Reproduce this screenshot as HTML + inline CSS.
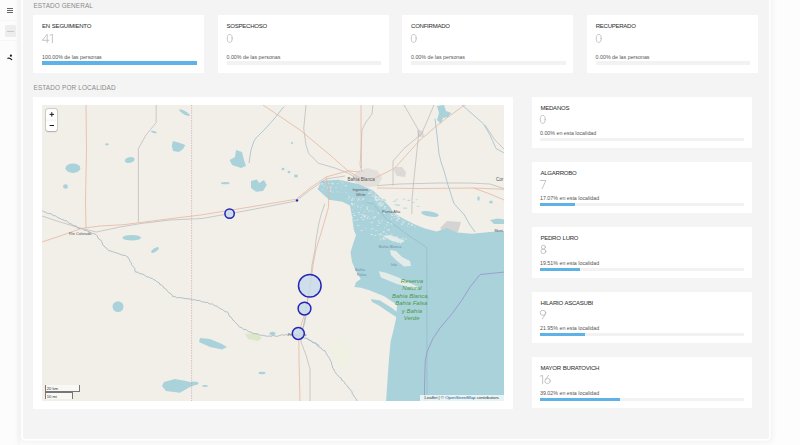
<!DOCTYPE html>
<html><head><meta charset="utf-8">
<style>
html,body{margin:0;padding:0;width:800px;height:445px;overflow:hidden;background:#fdfdfd;font-family:"Liberation Sans",sans-serif;}
.abs{position:absolute;}
#side{left:0;top:0;width:20px;height:445px;background:#fcfcfc;}
#cont{left:22.8px;top:0;width:745.8px;height:439px;background:#f4f4f4;border-radius:0 0 2px 2px;box-shadow:0 0 0 1.5px #fff, 0 0 4px 5px rgba(0,0,0,0.03);}
.lbl{font-size:6.4px;color:#8a8a8a;letter-spacing:0.1px;}
.card{background:#fff;}
.ttl{font-size:6px;color:#333;letter-spacing:-0.24px;word-spacing:0.5px;-webkit-text-stroke:0.05px #333;}
.num{font-size:12.6px;color:#c4c4c4;letter-spacing:-0.8px;}
.sub{font-size:5.3px;color:#555;}
.trk{background:#f2f2f2;height:3px;}
.bar{background:#5fb2e6;height:100%;}
</style></head><body>
<div id="side" class="abs">
  <div class="abs" style="left:14px;top:0;width:6px;height:445px;background:linear-gradient(90deg,rgba(0,0,0,0),rgba(0,0,0,0.018))"></div>
  <div class="abs" style="left:7px;top:8px;width:6px;height:1px;background:#666"></div>
  <div class="abs" style="left:7px;top:10px;width:6px;height:1px;background:#666"></div>
  <div class="abs" style="left:7px;top:12px;width:6px;height:1px;background:#666"></div>
  <div class="abs" style="left:0;top:20px;width:18px;height:1px;background:#f5f5f5"></div>
  <div class="abs" style="left:4.7px;top:25.4px;width:11.8px;height:11.5px;background:#ededed;border-radius:1.5px"></div>
  <div class="abs" style="left:6.8px;top:31px;width:7.7px;height:1px;background:#cacaca"></div>
  <div class="abs" style="left:0;top:39.5px;width:18px;height:1px;background:#f5f5f5"></div>
  <svg class="abs" style="left:6px;top:54px" width="8" height="8" viewBox="0 0 8 8"><circle cx="4.9" cy="1.7" r="1.1" fill="#1a1a1a"/><path d="M1.8,4.2 Q3.6,3.5 5.7,5.6" stroke="#1a1a1a" stroke-width="1.2" stroke-linecap="round" fill="none"/></svg>
</div>
<div id="cont" class="abs"></div>
<div class="abs lbl" style="left:33.4px;top:2px">ESTADO GENERAL</div>

<!-- top cards -->
<div class="abs card" style="left:33.2px;top:14.7px;width:171.3px;height:58.1px">
  <div class="abs ttl" style="left:8.9px;top:8px">EN SEGUIMIENTO</div>
  <svg class="abs" style="left:9.0px;top:18.9px;overflow:visible" width="12.8" height="9.3" preserveAspectRatio="none" viewBox="0 0 12.8 10"><g fill="none" stroke="#b9b9b9" stroke-width="0.85" stroke-linecap="round" stroke-linejoin="round"><g transform="translate(0.00,0)"><path d="M5.2,9.4 L5.2,0.3 L0.4,6.8 L6.9,6.8"/></g><g transform="translate(7.80,0)"><path d="M0.3,1.3 L2.6,0.3 L2.6,9.4"/></g></g></svg>
  <div class="abs sub" style="left:8.8px;top:39.6px">100.00% de las personas</div>
  <div class="abs trk" style="left:8.9px;top:46.6px;width:154.8px;height:3.6px"><div class="bar" style="width:100%"></div></div>
</div>
<div class="abs card" style="left:217.7px;top:14.7px;width:171.3px;height:58.1px">
  <div class="abs ttl" style="left:8.9px;top:8px">SOSPECHOSO</div>
  <svg class="abs" style="left:9.0px;top:18.9px;overflow:visible" width="7.1" height="9.3" preserveAspectRatio="none" viewBox="0 0 7.1 10"><g fill="none" stroke="#b9b9b9" stroke-width="0.85" stroke-linecap="round" stroke-linejoin="round"><g transform="translate(0.00,0)"><ellipse cx="2.75" cy="4.7" rx="2.45" ry="4.35"/></g></g></svg>
  <div class="abs sub" style="left:8.8px;top:39.6px">0.00% de las personas</div>
  <div class="abs trk" style="left:8.9px;top:46.6px;width:154.8px;height:3.6px"></div>
</div>
<div class="abs card" style="left:402.2px;top:14.7px;width:171.3px;height:58.1px">
  <div class="abs ttl" style="left:8.9px;top:8px">CONFIRMADO</div>
  <svg class="abs" style="left:9.0px;top:18.9px;overflow:visible" width="7.1" height="9.3" preserveAspectRatio="none" viewBox="0 0 7.1 10"><g fill="none" stroke="#b9b9b9" stroke-width="0.85" stroke-linecap="round" stroke-linejoin="round"><g transform="translate(0.00,0)"><ellipse cx="2.75" cy="4.7" rx="2.45" ry="4.35"/></g></g></svg>
  <div class="abs sub" style="left:8.8px;top:39.6px">0.00% de las personas</div>
  <div class="abs trk" style="left:8.9px;top:46.6px;width:154.8px;height:3.6px"></div>
</div>
<div class="abs card" style="left:586.8px;top:14.7px;width:171.3px;height:58.1px">
  <div class="abs ttl" style="left:8.9px;top:8px">RECUPERADO</div>
  <svg class="abs" style="left:9.0px;top:18.9px;overflow:visible" width="7.1" height="9.3" preserveAspectRatio="none" viewBox="0 0 7.1 10"><g fill="none" stroke="#b9b9b9" stroke-width="0.85" stroke-linecap="round" stroke-linejoin="round"><g transform="translate(0.00,0)"><ellipse cx="2.75" cy="4.7" rx="2.45" ry="4.35"/></g></g></svg>
  <div class="abs sub" style="left:8.8px;top:39.6px">0.00% de las personas</div>
  <div class="abs trk" style="left:8.9px;top:46.6px;width:154.8px;height:3.6px"></div>
</div>

<div class="abs lbl" style="left:33.5px;top:84.3px;letter-spacing:0.14px">ESTADO POR LOCALIDAD</div>

<!-- map card -->
<div class="abs card" style="left:33.4px;top:97px;width:479.2px;height:311.8px"></div>
<div id="map" class="abs" style="left:42px;top:105px;width:462px;height:295.5px;background:#f2efe9;overflow:hidden">
<svg width="462" height="296" viewBox="42 105 462 296" style="position:absolute;left:0;top:0;display:block">
<rect x="42" y="105" width="462" height="296" fill="#f2efe9"/>
<!-- urban areas -->
<g fill="#dcd9d6">
<path d="M352,176 L360,170 L368,168 L378,171 L382,178 L378,186 L368,187 L356,184 Z" fill="#e3e0dc"/>
<path d="M395,167 L402,167 L406,172 L405,177 L397,176 L394,171 Z"/>
<path d="M417,130 L423,131 L424,137 L418,137 Z"/>
<path d="M440,228 L447,221 L461,222 L458,232 L444,233 Z" fill="#d6d4d2"/>
</g>
<!-- green/park -->
<path d="M245,334 L256,333 L262,338 L258,341 L248,339 Z" fill="#d6e4c0" opacity="0.8"/>
<path d="M331,342 L342,338 L350,345 L350,368 L338,366 L332,355 Z" fill="#eef0e0" opacity="0.6"/>
<!-- sea -->
<path fill="#aad2db" d="M317.6,189.3 L321.5,180.7 L338.7,179.8 L348,181.7 L359.7,184.6 L373,190.5 L381,198 L389,206 L394.5,213.5 L404,219 L415,224.5 L425,228.5 L436.5,231.4 L446.8,228 L457.5,232.5 L472,233.7 L490,232 L505,231 L505,402 L386,402 L386.3,398 L387.8,375.5 L389,358.7 L390.6,341.8 L393.4,330.6 L396,319 L397,305 L384.3,296.3 L368.6,290 L360.7,287.7 L354.4,287 L356,282.2 L360.7,279 L356,271.2 L352,261.7 L350.5,252.3 L352.9,244.4 L356,235 L353.9,230 L352,217 L350,205.6 L342.5,201.8 L329,199.8 Z"/>
<!-- inlet channel -->
<path fill="#aad2db" d="M371,299 L380,300.5 L392,308 L402,316 L401,320 L390,313 L378,305 L372,302 Z"/>
<!-- islands / mudflats -->
<g fill="#e4ecea">
<path d="M378.8,271.2 L386,272.7 L398.5,277.5 L410,283 L420,288 L418,290 L405,286 L397,284 L381,277.5 Z"/>
<path d="M390,250 L396,251 L402,257 L410,261 L411,266 L404,266.5 L396,260 L391,255 Z"/>
<path d="M383,236 L390,235 L398,238 L405,241 L401,243 L392,241 Z"/>
</g>
<g fill="#dde9ea" opacity="0.9">
<ellipse cx="361.2" cy="200.1" rx="1.05" ry="0.34"/>
<ellipse cx="371.2" cy="210.2" rx="0.46" ry="0.60"/>
<ellipse cx="349.3" cy="197.3" rx="0.82" ry="0.80"/>
<ellipse cx="351.8" cy="203.5" rx="1.03" ry="0.87"/>
<ellipse cx="373.1" cy="211.6" rx="1.38" ry="0.33"/>
<ellipse cx="352.8" cy="198.5" rx="0.71" ry="0.79"/>
<ellipse cx="354.5" cy="220.3" rx="1.04" ry="0.52"/>
<ellipse cx="371.7" cy="196.0" rx="0.46" ry="0.42"/>
<ellipse cx="378.0" cy="213.1" rx="0.71" ry="0.65"/>
<ellipse cx="367.3" cy="207.1" rx="1.19" ry="0.72"/>
<ellipse cx="357.5" cy="220.0" rx="0.93" ry="0.83"/>
<ellipse cx="380.3" cy="206.5" rx="1.38" ry="0.37"/>
<ellipse cx="365.7" cy="228.6" rx="0.55" ry="0.59"/>
<ellipse cx="381.9" cy="219.9" rx="1.28" ry="0.49"/>
<ellipse cx="378.7" cy="220.9" rx="0.98" ry="0.57"/>
<ellipse cx="385.5" cy="237.4" rx="0.87" ry="0.70"/>
<ellipse cx="384.6" cy="206.4" rx="0.79" ry="0.70"/>
<ellipse cx="353.9" cy="198.5" rx="0.46" ry="0.76"/>
<ellipse cx="352.1" cy="204.6" rx="0.79" ry="0.82"/>
<ellipse cx="371.8" cy="234.5" rx="1.22" ry="0.82"/>
<ellipse cx="359.1" cy="212.5" rx="0.76" ry="0.83"/>
<ellipse cx="354.3" cy="203.9" rx="0.63" ry="0.59"/>
<ellipse cx="373.7" cy="205.3" rx="0.40" ry="0.55"/>
<ellipse cx="363.4" cy="219.6" rx="1.35" ry="0.71"/>
<ellipse cx="370.2" cy="222.0" rx="1.08" ry="0.33"/>
<ellipse cx="388.3" cy="229.7" rx="1.27" ry="0.78"/>
<ellipse cx="364.4" cy="211.8" rx="0.50" ry="0.68"/>
<ellipse cx="348.9" cy="196.2" rx="0.61" ry="0.40"/>
<ellipse cx="362.0" cy="195.5" rx="0.40" ry="0.39"/>
<ellipse cx="350.8" cy="210.1" rx="0.43" ry="0.82"/>
<ellipse cx="374.9" cy="200.0" rx="0.65" ry="0.51"/>
<ellipse cx="363.1" cy="198.8" rx="1.25" ry="0.90"/>
<ellipse cx="367.9" cy="215.7" rx="0.49" ry="0.36"/>
<ellipse cx="362.1" cy="205.4" rx="1.23" ry="0.40"/>
<ellipse cx="370.8" cy="199.9" rx="0.94" ry="0.32"/>
<ellipse cx="386.6" cy="225.7" rx="0.66" ry="0.52"/>
<ellipse cx="371.0" cy="229.6" rx="0.73" ry="0.43"/>
<ellipse cx="384.1" cy="239.3" rx="1.25" ry="0.78"/>
<ellipse cx="384.5" cy="227.8" rx="0.63" ry="0.61"/>
<ellipse cx="362.7" cy="194.4" rx="0.43" ry="0.47"/>
<ellipse cx="358.2" cy="225.5" rx="1.36" ry="0.57"/>
<ellipse cx="390.0" cy="239.4" rx="1.36" ry="0.52"/>
<ellipse cx="356.4" cy="203.7" rx="0.60" ry="0.42"/>
<ellipse cx="375.3" cy="235.3" rx="1.24" ry="0.59"/>
<ellipse cx="376.7" cy="230.6" rx="0.48" ry="0.70"/>
<ellipse cx="388.8" cy="229.8" rx="1.15" ry="0.59"/>
<ellipse cx="361.6" cy="230.6" rx="1.37" ry="0.54"/>
<ellipse cx="352.0" cy="200.1" rx="1.30" ry="0.78"/>
<ellipse cx="392.1" cy="223.9" rx="0.75" ry="0.63"/>
<ellipse cx="391.6" cy="223.5" rx="0.93" ry="0.86"/>
<ellipse cx="357.8" cy="206.8" rx="0.64" ry="0.65"/>
<ellipse cx="358.2" cy="212.7" rx="0.53" ry="0.85"/>
<ellipse cx="362.6" cy="214.5" rx="0.98" ry="0.84"/>
<ellipse cx="369.6" cy="218.0" rx="0.92" ry="0.31"/>
<ellipse cx="366.7" cy="201.6" rx="0.40" ry="0.78"/>
<ellipse cx="354.1" cy="215.3" rx="1.13" ry="0.63"/>
<ellipse cx="361.3" cy="217.4" rx="0.96" ry="0.77"/>
<ellipse cx="357.7" cy="206.0" rx="1.17" ry="0.60"/>
<ellipse cx="372.4" cy="228.7" rx="1.31" ry="0.57"/>
<ellipse cx="374.8" cy="216.8" rx="0.91" ry="0.72"/>
<ellipse cx="367.3" cy="218.1" rx="0.88" ry="0.86"/>
<ellipse cx="378.9" cy="234.2" rx="1.34" ry="0.46"/>
<ellipse cx="351.7" cy="213.8" rx="0.47" ry="0.44"/>
<ellipse cx="382.8" cy="235.2" rx="0.55" ry="0.73"/>
<ellipse cx="377.0" cy="199.7" rx="1.28" ry="0.88"/>
<ellipse cx="364.7" cy="215.9" rx="1.39" ry="0.80"/>
<ellipse cx="353.6" cy="213.3" rx="0.92" ry="0.50"/>
<ellipse cx="355.2" cy="208.0" rx="1.12" ry="0.31"/>
<ellipse cx="372.0" cy="213.7" rx="0.42" ry="0.50"/>
<ellipse cx="375.3" cy="217.1" rx="0.46" ry="0.89"/>
<ellipse cx="383.1" cy="238.7" rx="0.50" ry="0.46"/>
<ellipse cx="358.7" cy="199.1" rx="0.82" ry="0.85"/>
<ellipse cx="372.8" cy="225.9" rx="0.49" ry="0.33"/>
<ellipse cx="378.3" cy="213.0" rx="0.47" ry="0.86"/>
<ellipse cx="375.8" cy="230.7" rx="0.48" ry="0.81"/>
<ellipse cx="367.3" cy="208.9" rx="0.95" ry="0.86"/>
<ellipse cx="358.6" cy="199.1" rx="0.93" ry="0.44"/>
<ellipse cx="351.1" cy="200.6" rx="0.45" ry="0.42"/>
<ellipse cx="360.7" cy="207.3" rx="1.16" ry="0.47"/>
<ellipse cx="369.5" cy="201.4" rx="0.75" ry="0.31"/>
<ellipse cx="357.8" cy="193.7" rx="1.13" ry="0.63"/>
<ellipse cx="354.9" cy="215.3" rx="1.33" ry="0.36"/>
<ellipse cx="384.5" cy="213.3" rx="0.90" ry="0.80"/>
<ellipse cx="364.5" cy="216.8" rx="1.09" ry="0.89"/>
<ellipse cx="379.2" cy="222.9" rx="0.80" ry="0.51"/>
<ellipse cx="348.6" cy="199.1" rx="0.47" ry="0.74"/>
<ellipse cx="358.0" cy="200.7" rx="0.48" ry="0.80"/>
<ellipse cx="386.9" cy="224.5" rx="0.68" ry="0.45"/>
<ellipse cx="359.8" cy="214.6" rx="0.56" ry="0.57"/>
<ellipse cx="391.7" cy="218.7" rx="0.64" ry="0.88"/>
<ellipse cx="360.5" cy="209.8" rx="0.40" ry="0.53"/>
<ellipse cx="368.3" cy="216.6" rx="0.60" ry="0.60"/>
<ellipse cx="348.0" cy="194.1" rx="0.70" ry="0.44"/>
<ellipse cx="373.5" cy="217.9" rx="1.15" ry="0.69"/>
<ellipse cx="379.7" cy="234.3" rx="0.79" ry="0.50"/>
<ellipse cx="380.0" cy="223.2" rx="0.44" ry="0.80"/>
<ellipse cx="387.9" cy="222.5" rx="1.13" ry="0.79"/>
<ellipse cx="352.5" cy="217.6" rx="0.90" ry="0.80"/>
<ellipse cx="383.8" cy="231.8" rx="0.98" ry="0.84"/>
<ellipse cx="378.1" cy="225.6" rx="0.63" ry="0.32"/>
<ellipse cx="352.3" cy="210.0" rx="0.50" ry="0.80"/>
<ellipse cx="372.3" cy="222.5" rx="1.03" ry="0.71"/>
<ellipse cx="369.0" cy="193.2" rx="1.20" ry="0.75"/>
<ellipse cx="369.6" cy="218.2" rx="1.06" ry="0.34"/>
<ellipse cx="380.6" cy="204.9" rx="0.47" ry="0.46"/>
<ellipse cx="380.3" cy="202.6" rx="1.14" ry="0.89"/>
<ellipse cx="369.2" cy="211.0" rx="0.88" ry="0.71"/>
<ellipse cx="382.0" cy="222.0" rx="1.04" ry="0.35"/>
<ellipse cx="352.9" cy="204.9" rx="1.14" ry="0.48"/>
<ellipse cx="377.6" cy="225.5" rx="1.08" ry="0.47"/>
<ellipse cx="387.5" cy="205.9" rx="0.87" ry="0.37"/>
<ellipse cx="385.5" cy="201.1" rx="0.54" ry="0.51"/>
<ellipse cx="383.2" cy="203.8" rx="1.40" ry="0.65"/>
<ellipse cx="382.8" cy="204.8" rx="0.68" ry="0.33"/>
<ellipse cx="379.5" cy="200.0" rx="0.91" ry="0.41"/>
<ellipse cx="398.5" cy="216.4" rx="1.03" ry="0.85"/>
<ellipse cx="394.6" cy="211.3" rx="0.69" ry="0.33"/>
<ellipse cx="386.2" cy="202.3" rx="0.70" ry="0.74"/>
<ellipse cx="377.0" cy="196.8" rx="0.61" ry="0.84"/>
<ellipse cx="379.2" cy="199.8" rx="0.97" ry="0.83"/>
<ellipse cx="384.4" cy="207.7" rx="0.78" ry="0.50"/>
<ellipse cx="387.1" cy="210.9" rx="1.26" ry="0.43"/>
<ellipse cx="380.1" cy="199.5" rx="0.80" ry="0.57"/>
<ellipse cx="396.8" cy="217.7" rx="1.37" ry="0.45"/>
<ellipse cx="375.3" cy="196.6" rx="0.92" ry="0.71"/>
<ellipse cx="391.4" cy="214.9" rx="0.86" ry="0.63"/>
<ellipse cx="375.8" cy="199.6" rx="1.04" ry="0.72"/>
<ellipse cx="375.4" cy="194.1" rx="0.92" ry="0.65"/>
<ellipse cx="381.0" cy="205.8" rx="1.36" ry="0.69"/>
<ellipse cx="379.0" cy="199.4" rx="1.36" ry="0.72"/>
<ellipse cx="386.9" cy="212.2" rx="0.82" ry="0.45"/>
<ellipse cx="382.1" cy="204.6" rx="1.08" ry="0.42"/>
<ellipse cx="395.9" cy="214.2" rx="0.90" ry="0.42"/>
<ellipse cx="378.7" cy="204.5" rx="1.07" ry="0.87"/>
<ellipse cx="398.9" cy="218.5" rx="1.13" ry="0.90"/>
<ellipse cx="383.2" cy="202.0" rx="0.57" ry="0.30"/>
<ellipse cx="380.4" cy="202.5" rx="1.36" ry="0.37"/>
<ellipse cx="377.8" cy="202.9" rx="1.30" ry="0.32"/>
<ellipse cx="373.0" cy="193.9" rx="1.32" ry="0.45"/>
<ellipse cx="382.2" cy="200.2" rx="1.36" ry="0.67"/>
<ellipse cx="381.5" cy="200.3" rx="0.40" ry="0.75"/>
<ellipse cx="383.6" cy="199.5" rx="0.83" ry="0.60"/>
<ellipse cx="396.1" cy="214.2" rx="1.22" ry="0.76"/>
<ellipse cx="381.6" cy="202.9" rx="1.18" ry="0.35"/>
<ellipse cx="379.0" cy="204.5" rx="1.02" ry="0.70"/>
<ellipse cx="394.4" cy="217.4" rx="1.06" ry="0.37"/>
<ellipse cx="379.4" cy="199.4" rx="0.55" ry="0.83"/>
<ellipse cx="397.2" cy="219.4" rx="0.44" ry="0.48"/>
<ellipse cx="375.6" cy="197.7" rx="1.37" ry="0.65"/>
<ellipse cx="389.9" cy="210.6" rx="0.62" ry="0.52"/>
<ellipse cx="322.2" cy="183.4" rx="0.65" ry="0.66"/>
<ellipse cx="337.5" cy="183.4" rx="0.41" ry="0.50"/>
<ellipse cx="338.3" cy="183.2" rx="0.71" ry="0.42"/>
<ellipse cx="341.9" cy="187.6" rx="0.46" ry="0.36"/>
<ellipse cx="329.9" cy="187.6" rx="1.04" ry="0.35"/>
<ellipse cx="322.9" cy="189.3" rx="0.81" ry="0.47"/>
<ellipse cx="327.4" cy="187.8" rx="0.76" ry="0.55"/>
<ellipse cx="328.9" cy="183.4" rx="1.13" ry="0.42"/>
<ellipse cx="330.7" cy="190.8" rx="0.81" ry="0.83"/>
<ellipse cx="331.8" cy="183.0" rx="0.41" ry="0.63"/>
<ellipse cx="337.2" cy="191.9" rx="0.49" ry="0.67"/>
<ellipse cx="329.1" cy="187.1" rx="0.55" ry="0.47"/>
<ellipse cx="333.6" cy="192.1" rx="0.51" ry="0.59"/>
<ellipse cx="342.1" cy="192.6" rx="0.60" ry="0.38"/>
<ellipse cx="346.3" cy="192.7" rx="0.88" ry="0.33"/>
<ellipse cx="345.8" cy="185.7" rx="1.30" ry="0.67"/>
<ellipse cx="342.7" cy="182.9" rx="1.19" ry="0.43"/>
<ellipse cx="330.1" cy="191.2" rx="1.23" ry="0.41"/>
<ellipse cx="324.5" cy="185.8" rx="0.92" ry="0.53"/>
<ellipse cx="321.7" cy="184.0" rx="1.12" ry="0.84"/>
<ellipse cx="340.7" cy="181.5" rx="1.24" ry="0.37"/>
<ellipse cx="336.0" cy="187.6" rx="1.03" ry="0.48"/>
<ellipse cx="330.6" cy="188.0" rx="0.83" ry="0.70"/>
<ellipse cx="331.4" cy="186.3" rx="0.42" ry="0.67"/>
<ellipse cx="332.7" cy="183.8" rx="1.16" ry="0.77"/>
<ellipse cx="391.9" cy="234.2" rx="0.87" ry="0.36"/>
<ellipse cx="383.3" cy="237.2" rx="0.49" ry="0.57"/>
<ellipse cx="399.1" cy="241.3" rx="0.91" ry="0.33"/>
<ellipse cx="393.1" cy="236.5" rx="1.35" ry="0.38"/>
<ellipse cx="399.0" cy="241.8" rx="0.59" ry="0.89"/>
<ellipse cx="400.5" cy="243.2" rx="0.47" ry="0.51"/>
<ellipse cx="385.4" cy="235.2" rx="0.91" ry="0.49"/>
<ellipse cx="381.0" cy="234.2" rx="0.56" ry="0.86"/>
<ellipse cx="397.7" cy="242.7" rx="0.57" ry="0.77"/>
<ellipse cx="383.0" cy="238.4" rx="1.04" ry="0.52"/>
<ellipse cx="402.7" cy="238.7" rx="0.98" ry="0.83"/>
<ellipse cx="396.4" cy="236.7" rx="1.20" ry="0.46"/>
<ellipse cx="405.8" cy="238.9" rx="0.76" ry="0.76"/>
<ellipse cx="391.5" cy="234.1" rx="1.14" ry="0.33"/>
<ellipse cx="395.2" cy="240.0" rx="0.71" ry="0.30"/>
<ellipse cx="380.9" cy="233.8" rx="1.02" ry="0.56"/>
<ellipse cx="393.3" cy="242.7" rx="0.53" ry="0.44"/>
<ellipse cx="380.1" cy="236.3" rx="0.51" ry="0.51"/>
<ellipse cx="385.8" cy="239.0" rx="0.99" ry="0.42"/>
<ellipse cx="396.2" cy="237.7" rx="0.53" ry="0.86"/>
<ellipse cx="386.3" cy="233.8" rx="0.50" ry="0.68"/>
<ellipse cx="402.7" cy="241.4" rx="0.80" ry="0.46"/>
<ellipse cx="380.3" cy="239.7" rx="0.96" ry="0.51"/>
<ellipse cx="396.8" cy="237.3" rx="1.34" ry="0.74"/>
<ellipse cx="381.1" cy="238.4" rx="0.81" ry="0.44"/>
</g>
<g fill="#dde9ea" opacity="0.9"><ellipse cx="389.1" cy="212.4" rx="1.14" ry="0.53"/><ellipse cx="391.9" cy="213.5" rx="0.55" ry="0.56"/><ellipse cx="398.1" cy="221.7" rx="0.48" ry="0.45"/><ellipse cx="375.7" cy="199.7" rx="0.42" ry="0.53"/><ellipse cx="392.5" cy="215.6" rx="0.80" ry="0.63"/><ellipse cx="382.1" cy="199.2" rx="0.63" ry="0.34"/><ellipse cx="371.2" cy="192.4" rx="1.04" ry="0.39"/><ellipse cx="376.9" cy="200.8" rx="1.18" ry="0.70"/><ellipse cx="376.9" cy="200.3" rx="1.02" ry="0.46"/><ellipse cx="385.0" cy="208.1" rx="1.17" ry="0.54"/><ellipse cx="375.3" cy="196.2" rx="1.13" ry="0.71"/><ellipse cx="378.7" cy="197.6" rx="0.99" ry="0.77"/><ellipse cx="411.9" cy="224.8" rx="0.73" ry="0.70"/><ellipse cx="376.3" cy="196.8" rx="1.12" ry="0.63"/><ellipse cx="408.7" cy="223.9" rx="0.97" ry="0.78"/><ellipse cx="398.1" cy="216.2" rx="1.05" ry="0.78"/><ellipse cx="379.9" cy="203.8" rx="0.96" ry="0.56"/><ellipse cx="397.3" cy="220.2" rx="0.71" ry="0.70"/><ellipse cx="402.8" cy="222.7" rx="0.91" ry="0.66"/><ellipse cx="373.2" cy="195.9" rx="0.81" ry="0.66"/><ellipse cx="381.9" cy="205.2" rx="1.08" ry="0.75"/><ellipse cx="414.8" cy="226.9" rx="0.62" ry="0.54"/><ellipse cx="407.6" cy="226.0" rx="0.78" ry="0.46"/><ellipse cx="375.9" cy="199.1" rx="0.95" ry="0.46"/><ellipse cx="378.8" cy="197.9" rx="0.82" ry="0.52"/><ellipse cx="385.2" cy="206.5" rx="0.82" ry="0.38"/><ellipse cx="403.8" cy="222.4" rx="1.12" ry="0.46"/><ellipse cx="371.4" cy="191.5" rx="0.84" ry="0.56"/><ellipse cx="375.4" cy="198.2" rx="1.07" ry="0.80"/><ellipse cx="401.8" cy="223.8" rx="0.55" ry="0.53"/><ellipse cx="376.0" cy="196.6" rx="0.81" ry="0.31"/><ellipse cx="401.9" cy="224.4" rx="0.90" ry="0.50"/><ellipse cx="404.0" cy="221.1" rx="1.05" ry="0.50"/><ellipse cx="411.7" cy="225.2" rx="0.96" ry="0.68"/><ellipse cx="383.4" cy="208.8" rx="0.41" ry="0.48"/><ellipse cx="401.8" cy="220.5" rx="1.18" ry="0.31"/><ellipse cx="397.4" cy="219.6" rx="0.61" ry="0.50"/><ellipse cx="396.5" cy="220.4" rx="0.44" ry="0.77"/><ellipse cx="392.9" cy="213.9" rx="0.69" ry="0.44"/><ellipse cx="387.9" cy="209.1" rx="1.18" ry="0.42"/><ellipse cx="396.2" cy="215.3" rx="1.00" ry="0.39"/><ellipse cx="412.7" cy="225.2" rx="0.43" ry="0.33"/><ellipse cx="394.1" cy="215.2" rx="0.70" ry="0.54"/><ellipse cx="404.0" cy="223.5" rx="0.46" ry="0.36"/><ellipse cx="370.0" cy="193.3" rx="0.85" ry="0.54"/></g>
<g fill="#aad2db"><rect x="407.4" y="200.0" width="2.7" height="0.6"/><rect x="383.0" y="199.1" width="2.5" height="0.6"/><rect x="383.3" y="200.0" width="2.6" height="0.6"/><rect x="407.8" y="199.8" width="1.7" height="0.6"/><rect x="394.3" y="204.3" width="2.0" height="0.6"/><rect x="384.7" y="204.1" width="2.4" height="0.6"/><rect x="416.7" y="206.4" width="2.9" height="0.6"/><rect x="397.5" y="205.0" width="2.0" height="0.6"/><rect x="392.7" y="201.0" width="2.9" height="0.6"/><rect x="415.8" y="199.5" width="2.0" height="0.6"/><rect x="394.6" y="200.6" width="2.1" height="0.6"/><rect x="395.5" y="198.9" width="2.3" height="0.6"/><rect x="411.9" y="202.4" width="2.8" height="0.6"/><rect x="402.5" y="198.8" width="2.6" height="0.6"/></g>
<!-- water bodies -->
<g fill="#aad2db">
<ellipse cx="72.9" cy="168.2" rx="7.4" ry="4.8"/>
<ellipse cx="65.5" cy="186.5" rx="2.4" ry="2.2"/>
<ellipse cx="129.7" cy="160" rx="5" ry="2.8" transform="rotate(-15 129.7 160)"/>
<ellipse cx="107" cy="144.3" rx="1.9" ry="1.1"/>
<path d="M173,141 L180,143 L185.4,145 L183,149 L179,152 L173,151 L171.8,146 Z"/>
<ellipse cx="184.5" cy="112.7" rx="6" ry="1.7" transform="rotate(30 184.5 112.7)"/>
<ellipse cx="153.9" cy="132" rx="3" ry="1" transform="rotate(15 153.9 132)"/>
<path d="M236,150 L242,152 L244,160 L246,166 L241,168 L232,165 L229.6,160 L235,157 Z"/>
<path d="M251,181 L257,179.4 L259,183 L264,180 L266.7,185 L263,191 L256,191.8 L251,188 Z"/>
<ellipse cx="225.3" cy="183.2" rx="4.3" ry="1.1"/>
<ellipse cx="283" cy="169" rx="1.5" ry="1.2"/>
<ellipse cx="289" cy="172" rx="1.5" ry="1.2"/>
<ellipse cx="296" cy="176" rx="2" ry="1.4"/>
<ellipse cx="292" cy="143" rx="1.2" ry="1"/>
<ellipse cx="131.7" cy="237.7" rx="9.3" ry="2.8"/>
<ellipse cx="155" cy="250" rx="4.5" ry="1.7" transform="rotate(-35 155 250)"/>
<ellipse cx="118" cy="306.6" rx="5.5" ry="5.4"/>
<path d="M164,382 L175,379 L186,381 L197.8,384 L190,387 L180,392.7 L166,391 L162,386 Z"/>
<path d="M200,338 L210,339 L222,344 L227,347 L222,349.4 L210,347 L199,342 Z"/>
<ellipse cx="194" cy="383.2" rx="4.5" ry="1.6"/>
<ellipse cx="205" cy="386" rx="3" ry="1"/>
<ellipse cx="262" cy="373" rx="3.5" ry="1.2"/>
<ellipse cx="272.5" cy="333.5" rx="3" ry="1.8"/>
<path d="M437,106 L444,105 L446,111 L451.3,113 L448,117 L443,118 L441,123.8 L437,120 L439,113 Z"/>
<ellipse cx="430" cy="214" rx="9" ry="2.6" transform="rotate(10 430 214)"/>
<path d="M490,220 L498,218.5 L504,219.5 L504,224 L494,224 Z"/>
<ellipse cx="478.5" cy="198.5" rx="1.2" ry="2.3"/>
<ellipse cx="491" cy="202" rx="1.8" ry="1.5"/>
<ellipse cx="398" cy="205" rx="2.5" ry="0.6"/>
<ellipse cx="405" cy="208" rx="2.5" ry="0.6"/>
</g>
<!-- rivers -->
<g fill="none" stroke="#9ebfcb" stroke-width="0.8">
<path stroke="#9fb3bd" d="M42.1,210.7 L43.6,211.7 L45.3,212.1 L46.8,213.0 L48.4,213.6 L50.3,213.6 L52.0,214.2 L53.2,215.8 L55.1,215.7 L56.8,216.5 L58.0,218.0 L59.9,218.2 L61.3,219.4 L63.1,219.7 L64.7,220.7 L66.6,220.9 L67.9,222.1 L69.3,223.3 L71.1,223.9 L72.6,225.0 L74.2,225.8 L76.1,226.1 L77.3,227.8 L79.0,228.5 L80.9,228.7 L82.8,228.9 L84.3,230.4 L86.2,230.4 L87.9,231.2 L89.5,232.1 L91.3,232.7 L92.8,233.6 L94.8,233.8 L96.1,234.8 L97.4,235.9 L97.8,237.6 L98.7,238.9 L100.4,239.7 L101.4,241.3 L102.3,242.8 L102.5,244.8 L104.1,245.9 L105.1,247.3 L106.6,248.2 L107.6,249.5 L108.8,250.6 L110.7,251.0 L112.5,251.7 L114.3,252.2 L116.0,253.0 L117.9,253.2 L119.3,254.0 L120.9,254.5 L122.3,255.2 L123.9,255.4 L125.6,255.4 L126.8,256.7 L128.0,257.1 L128.7,258.6 L129.7,260.0 L130.1,261.6 L131.3,262.8 L131.5,264.6 L132.6,265.9 L133.7,267.2 L134.8,268.5 L134.8,270.5 L135.8,272.2 L137.9,272.0 L139.2,273.5 L141.0,273.8 L142.8,274.2 L144.4,275.1 L145.9,276.3 L147.3,277.1 L149.2,276.9 L150.4,278.2 L152.2,278.3 L153.4,279.7 L155.1,280.0 L156.3,281.3 L157.6,282.0 L159.2,282.8 L159.9,284.5 L161.7,285.1 L163.0,286.2 L163.7,287.8 L165.4,288.6 L166.6,290.0 L167.7,291.4 L168.9,292.8 L170.6,293.6 L172.0,294.8 L172.9,296.8 L174.8,296.5 L176.5,297.6 L178.3,297.8 L180.2,297.5 L182.0,298.0 L183.7,298.2 L185.3,298.6 L187.0,298.7 L188.7,298.9 L190.4,299.1 L192.0,299.9 L193.7,299.7 L195.4,299.9 L197.0,300.6 L198.7,300.4 L200.4,300.8 L201.8,301.9 L203.7,301.9 L205.4,302.5 L207.3,302.4 L208.9,303.4 L210.5,304.1 L212.5,303.9 L213.9,305.1 L215.4,305.9 L217.1,306.2 L218.3,307.6 L219.8,308.2 L221.1,309.2 L222.8,309.7 L224.0,310.9 L225.4,311.7 L227.5,311.9 L228.4,313.3 L228.8,315.0 L229.6,316.5 L231.2,317.2 L232.0,318.7 L232.9,320.1 L234.5,321.3 L235.7,322.7 L237.1,324.0 L238.3,325.5 L239.5,327.1 L241.2,327.5 L242.7,328.4 L244.0,329.5 L246.0,329.5 L247.3,330.8 L248.8,331.8 L250.5,332.0 L252.1,332.7 L253.6,333.8 L255.5,333.6 L257.2,333.9 L258.9,334.6 L260.5,335.4 L262.4,335.1 L264.0,335.8 L265.7,335.8 L267.4,336.4 L269.1,335.9 L270.9,336.4 L272.6,335.6 L274.3,335.8 L276.0,336.2 L277.7,336.3 L279.2,335.6 L280.8,335.1 L282.5,334.8 L284.1,335.2 L285.7,334.6 L287.4,335.1 L288.9,335.0 L290.9,334.5 L292.6,334.9 L294.3,335.8 L296.2,335.9 L297.9,336.4 L299.7,336.3 L301.3,336.5 L302.9,337.1 L304.3,338.2 L306.1,338.1 L307.5,339.0 L308.9,339.8 L310.3,340.7 L311.8,341.5 L312.9,342.8 L314.8,342.8 L316.4,343.5 L316.9,345.4 L318.2,346.4 L319.4,347.5 L321.0,347.9 L321.9,349.4 L323.2,350.4 L325.0,350.7 L325.7,352.1 L326.4,353.8 L327.4,355.3 L328.4,356.8 L329.4,358.3 L330.2,359.9 L330.9,361.4 L331.6,362.9 L331.6,364.6 L332.5,366.0 L332.5,367.8 L333.8,368.9 L334.1,370.9 L335.4,372.0 L336.2,373.6 L337.3,374.9 L338.4,376.2 L339.8,377.4 L341.4,378.3 L341.8,380.2 L343.4,381.0 L344.5,382.4 L345.3,384.0 L346.5,385.2 L347.8,386.4 L348.5,388.1 L349.9,389.1 L351.0,390.4 L352.0,391.9 L352.3,393.7 L353.5,395.0 L354.1,396.7 L355.4,397.9 L356.4,399.3 L357.0,401.0"/>
<path d="M284,106.5 L278,114 L274,119 L266,128 L256,138 L254,141 L251,150 L249,163"/>
<path d="M435,118.8 L437,135 L439,153.5 L441,162 L444,170.8 L448,185 L453.8,203 L458,208 L463.7,214 L470,225 L475,232"/>
<path d="M461,104 L470,112 L483.5,123.8 L490,135 L496,148.5 L505,153.5"/>
<path d="M300,334 L304,325 L306,316"/>
<path d="M306,338 L320,346"/>
</g>
<!-- grey roads / rail -->
<g fill="none" stroke="#b3b3b3" stroke-width="0.65">
<path d="M156.2,104 L156.2,122.5 L146,135 L138.4,148.5 L138.4,221"/>
<path d="M42,216 L60,222 L81.6,228.4 L96.4,232 L120,227 L141,223.5 L170,220 L202,218.5 L250,210 L296,201 L310,190 L326,179 L345,176"/>
<path d="M306,105 L303.7,128.7 L306,145 L308.7,153.5 L318.6,163.3 L335,168 L348,173 L356,178"/>
<path d="M373,104 L372,114 L366,122 L362,130 L361,150 L360,165 L362,172"/>
<path d="M434,105 L421.7,133.7 L404,148.5 L393,161 L393,185.6"/>
<path d="M404,105 L419,131 L417,150 L414,178.2 L412,200 L411.8,214"/>
<path d="M377,185.6 L400,184 L439,183 L468.6,183 L490,184 L505,189"/>
<path d="M324.8,203.7 L321,215 L318.6,224.7 L316,240 L315,249.5 L312,265 L310,285 L306,310 L301,342 L306,355 L310,369 L310,402"/>
<path d="M485,125 L495,140 L505,150" />
</g>
<!-- orange roads -->
<g fill="none" stroke="#e6b39c" stroke-width="0.75">
<path d="M86,105 L86.5,150 L85.5,200 L86,228.4"/>
<path d="M138.4,221 L138.4,222"/>
<path d="M42,242 L60,236 L81.6,228.4 L100,226 L123.6,224.7 L160,220 L202,214.8 L250,207 L296.3,199.2 L310,188 L326,177 L348,170.8 L360,172"/>
<path d="M263,105 L300,130 L330,155 L348,170.8 L360,178"/>
<path d="M326,177 L329,190 L328.5,207.4 L322,230 L316,249.5 L313,265 L311,281.6 L308,298 L306,310 L302,322 L298.8,334.6 L299,360 L300,402"/>
<path d="M374.7,178.2 L394.5,168.3 L419,141 L440,123 L462.5,106.5 L467,104"/>
<path d="M377,188 L420,188.5 L473.6,188 L505,189.3"/>
<path d="M473.6,188 L490,194 L505,200.4"/>
<path d="M361,105 L361,130 L361.5,168"/>
</g>
<!-- admin boundary -->
<path d="M191.6,105 L191.6,402" stroke="#d2a2b6" stroke-width="0.7" stroke-dasharray="1.4,1.1" fill="none"/>
<!-- maritime boundary -->
<path d="M365.4,201.8 L373,203.7 L386.4,219 L408,235 L426.8,247.6 L427,402" stroke="#8fb7c4" stroke-width="0.6" fill="none"/>
<path d="M505,272 L490,273.5 L480,274.5 L470,287 L462,300 L452,313.7 L440,328 L432.7,339 L427,352 L425.2,361.5 L424.5,386.7 L424.5,402" stroke="#9a98c8" stroke-width="0.9" fill="none"/>
<!-- green reserve text -->
<g font-family="Liberation Sans" font-style="italic" font-size="6" fill="#4a9a4a" text-anchor="middle">
<text x="412" y="282.5">Reserva</text>
<text x="412" y="290">Natural</text>
<text x="410.6" y="297.6">Bahía Blanca,</text>
<text x="411.3" y="305.2">Bahía Falsa</text>
<text x="412" y="312.8">y Bahía</text>
<text x="411.6" y="319.6">Verde</text>
</g>
<!-- labels -->
<g font-family="Liberation Sans" font-size="4.6" fill="#555">
<text x="347.5" y="181">Bahía Blanca</text>
<text x="352.4" y="190.5" font-size="3.8">Ingeniero</text>
<text x="356" y="195.5" font-size="3.8">White</text>
<text x="382" y="213" font-size="4">Punta Alta</text>
<text x="496" y="181">Cor</text>
<text x="494.4" y="232" font-size="3.8">Mont</text>
<text x="69" y="234.6" font-size="3.8">Río Colorado</text>
<text x="287.7" y="336" font-size="3.8">Pedro Luro</text>
</g>
<g font-family="Liberation Sans" font-size="3.8" fill="#6a8fa8">
<text x="378.8" y="247.6">Bahía Blanca</text>
<text x="391" y="266">Isla</text><text x="355" y="271">Bahía</text><text x="357" y="275.5">Falsa</text>
</g>
<!-- circles -->
<g stroke="#2424b8" stroke-width="1.5" fill="rgba(200,220,235,0.85)">
<circle cx="229.6" cy="213.6" r="4.7"/>
<circle cx="309.8" cy="285.7" r="11.3"/>
<circle cx="304.5" cy="308.6" r="6.4"/>
<circle cx="298.3" cy="333.4" r="6"/>
</g>
<circle cx="297" cy="200.4" r="1.2" fill="#2424b8"/>
</svg>
<!-- zoom control -->
<div style="position:absolute;left:3.8px;top:3.8px;width:11.5px;height:22.4px;border-radius:2px;box-shadow:0 0 0 0.8px rgba(0,0,0,0.14),0 0.5px 1.5px rgba(0,0,0,0.2);background:#fff">
<svg width="12" height="23" viewBox="0 0 12 23" style="position:absolute;left:0;top:0">
<rect x="0" y="10.8" width="12" height="0.5" fill="#e2e2e2"/>
<rect x="3.6" y="4.9" width="4.4" height="1" fill="#1a1a1a"/>
<rect x="5.3" y="3.2" width="1" height="4.4" fill="#1a1a1a"/>
<rect x="3.6" y="16" width="4.4" height="1" fill="#1a1a1a"/>
</svg>
</div>
<!-- scale -->
<div style="position:absolute;left:2.5px;top:280px;width:35px;height:7px;border:0.8px solid #777;border-top:none;background:rgba(255,255,255,0.55);font-size:4.2px;color:#333;line-height:7px;padding-left:1.2px;box-sizing:border-box;white-space:nowrap">20 km</div>
<div style="position:absolute;left:2.5px;top:287px;width:28px;height:7px;border:0.8px solid #777;border-bottom:none;background:rgba(255,255,255,0.55);font-size:4.2px;color:#333;line-height:7px;padding-left:1.2px;box-sizing:border-box;white-space:nowrap">10 mi</div>
<!-- attribution -->
<div style="position:absolute;right:0;bottom:0;height:6px;width:84.5px;background:rgba(255,255,255,0.72);font-size:4.4px;line-height:6.2px;color:#333;text-align:center;white-space:nowrap;letter-spacing:-0.05px">Leaflet | © <span style="color:#2a5a8a">OpenStreetMap</span> contributors</div>

</div>

<!-- right cards -->
<div class="abs card" style="left:532px;top:96.7px;width:219.8px;height:51.8px">
  <div class="abs ttl" style="left:8.5px;top:8px">MEDANOS</div>
  <svg class="abs" style="left:8.0px;top:18.7px;overflow:visible" width="7.1" height="9.3" preserveAspectRatio="none" viewBox="0 0 7.1 10"><g fill="none" stroke="#b9b9b9" stroke-width="0.85" stroke-linecap="round" stroke-linejoin="round"><g transform="translate(0.00,0)"><ellipse cx="2.75" cy="4.7" rx="2.45" ry="4.35"/></g></g></svg>
  <div class="abs sub" style="left:8px;top:33.2px">0.00% en esta localidad</div>
  <div class="abs trk" style="left:8px;top:41.3px;width:203.8px"></div>
</div>
<div class="abs card" style="left:532px;top:161.7px;width:219.8px;height:51.8px">
  <div class="abs ttl" style="left:8.5px;top:8px">ALGARROBO</div>
  <svg class="abs" style="left:8.0px;top:18.7px;overflow:visible" width="7.8" height="9.3" preserveAspectRatio="none" viewBox="0 0 7.8 10"><g fill="none" stroke="#b9b9b9" stroke-width="0.85" stroke-linecap="round" stroke-linejoin="round"><g transform="translate(0.00,0)"><path d="M0.3,0.5 L5.9,0.5 L2.2,9.3"/></g></g></svg>
  <div class="abs sub" style="left:8px;top:33.2px">17.07% en esta localidad</div>
  <div class="abs trk" style="left:8px;top:41.3px;width:203.8px"><div class="bar" style="width:17.07%"></div></div>
</div>
<div class="abs card" style="left:532px;top:226.7px;width:219.8px;height:51.8px">
  <div class="abs ttl" style="left:8.5px;top:8px">PEDRO LURO</div>
  <svg class="abs" style="left:8.0px;top:18.7px;overflow:visible" width="7.4" height="9.3" preserveAspectRatio="none" viewBox="0 0 7.4 10"><g fill="none" stroke="#b9b9b9" stroke-width="0.85" stroke-linecap="round" stroke-linejoin="round"><g transform="translate(0.00,0)"><ellipse cx="3.4" cy="2.3" rx="2.0" ry="2.1"/><ellipse cx="3.4" cy="6.8" rx="2.45" ry="2.5"/></g></g></svg>
  <div class="abs sub" style="left:8px;top:33.2px">19.51% en esta localidad</div>
  <div class="abs trk" style="left:8px;top:41.3px;width:203.8px"><div class="bar" style="width:19.51%"></div></div>
</div>
<div class="abs card" style="left:532px;top:291.7px;width:219.8px;height:51.8px">
  <div class="abs ttl" style="left:8.5px;top:8px">HILARIO ASCASUBI</div>
  <svg class="abs" style="left:8.0px;top:18.7px;overflow:visible" width="7.6" height="9.3" preserveAspectRatio="none" viewBox="0 0 7.6 10"><g fill="none" stroke="#b9b9b9" stroke-width="0.85" stroke-linecap="round" stroke-linejoin="round"><g transform="translate(0.00,0)"><circle cx="3.0" cy="3.0" r="2.75"/><path d="M5.5,4.2 L2.4,9.3"/></g></g></svg>
  <div class="abs sub" style="left:8px;top:33.2px">21.95% en esta localidad</div>
  <div class="abs trk" style="left:8px;top:41.3px;width:203.8px"><div class="bar" style="width:21.95%"></div></div>
</div>
<div class="abs card" style="left:532px;top:356.7px;width:219.8px;height:51.8px">
  <div class="abs ttl" style="left:8.5px;top:8px">MAYOR BURATOVICH</div>
  <svg class="abs" style="left:8.0px;top:18.7px;overflow:visible" width="11.6" height="9.3" preserveAspectRatio="none" viewBox="0 0 11.6 10"><g fill="none" stroke="#b9b9b9" stroke-width="0.85" stroke-linecap="round" stroke-linejoin="round"><g transform="translate(0.00,0)"><path d="M0.3,1.3 L2.6,0.3 L2.6,9.4"/></g><g transform="translate(4.6,0)"><path d="M4.0,0.3 L1.0,4.9"/><circle cx="3.0" cy="6.4" r="2.75"/></g></g></svg>
  <div class="abs sub" style="left:8px;top:33.2px">39.02% en esta localidad</div>
  <div class="abs trk" style="left:8px;top:41.3px;width:203.8px"><div class="bar" style="width:39.02%"></div></div>
</div>
</body></html>
